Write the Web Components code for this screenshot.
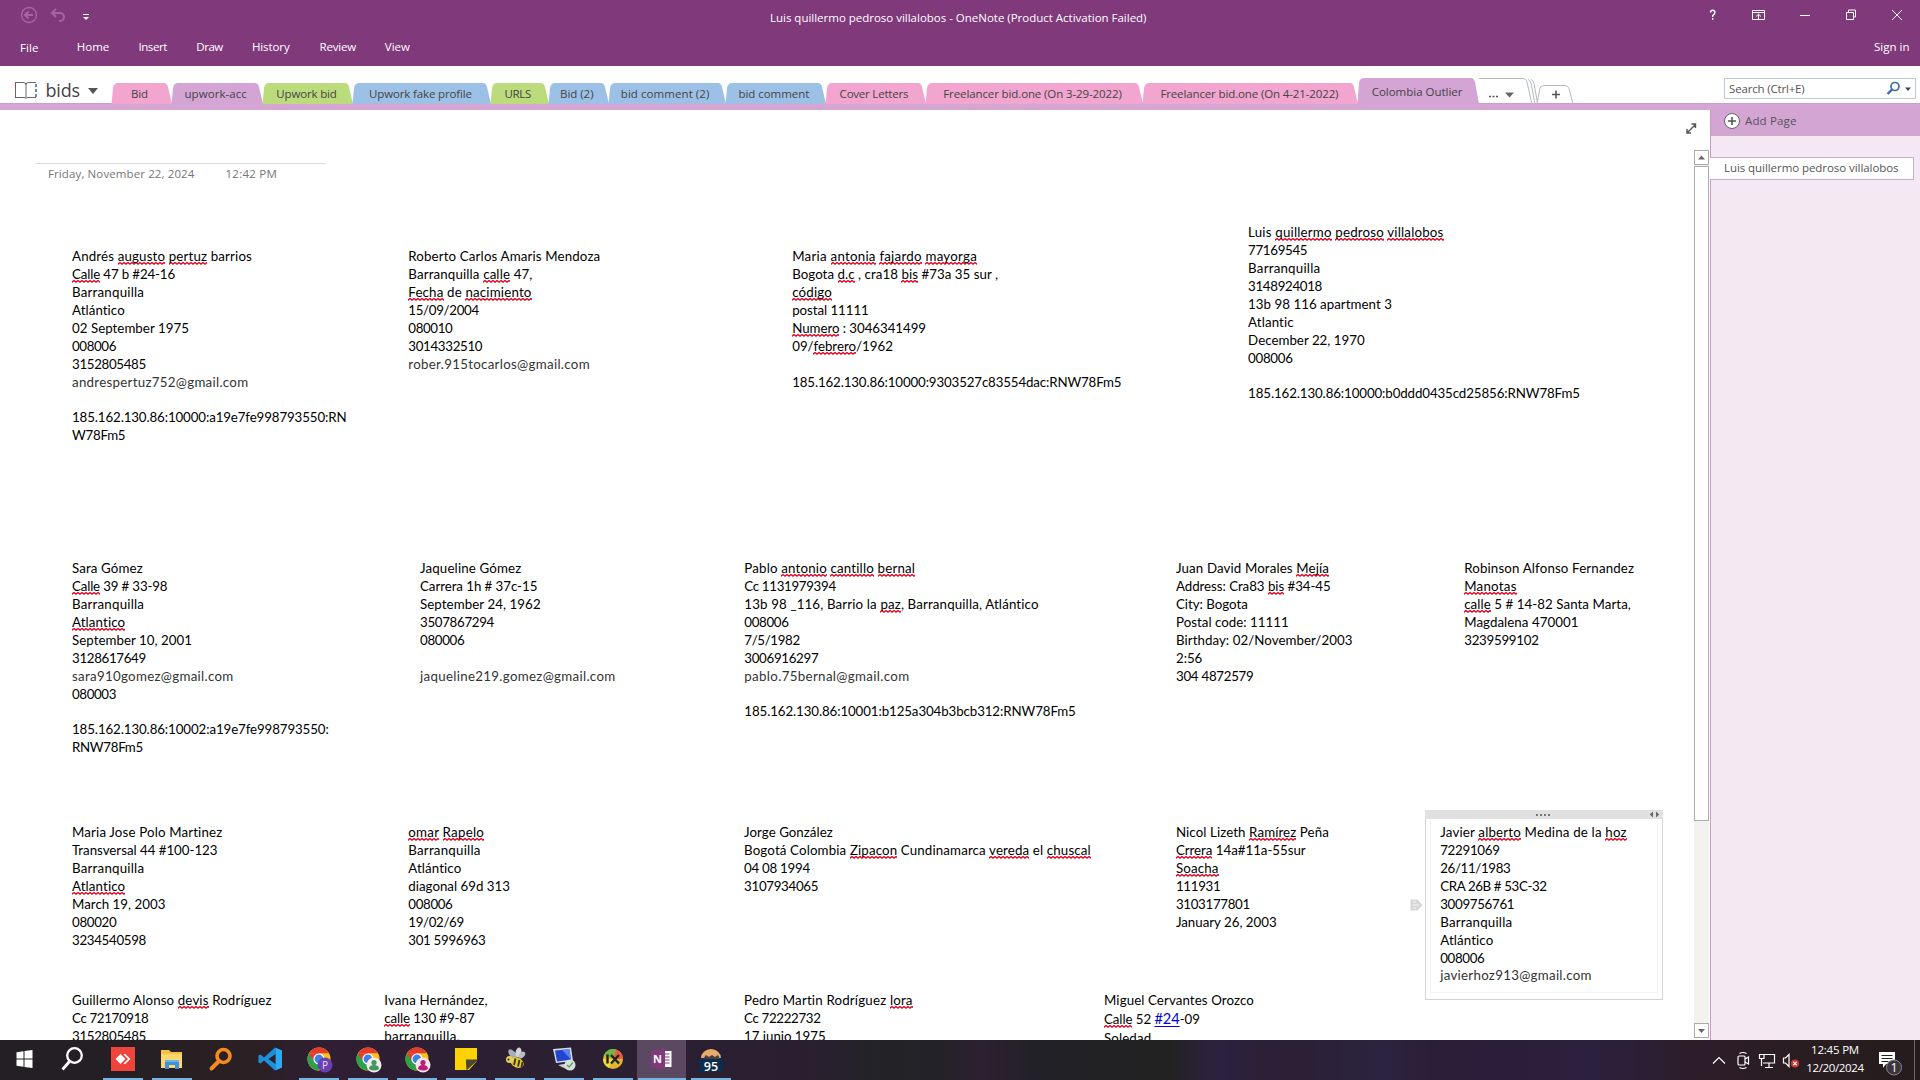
<!DOCTYPE html>
<html lang="en">
<head>
<meta charset="utf-8">
<title>OneNote</title>
<style>
html,body{margin:0;padding:0;height:1080px;overflow:hidden}
body{width:1920px;font-family:"Open Sans","Noto Sans",sans-serif;font-size:11.5px}
</style>
</head>
<body>
<note-app></note-app>
<script>
const FIT = el => {
  const w = parseFloat(el.getAttribute('w'));
  if (!w) return;
  const s = el.shadowRoot.querySelector('span');
  s.style.letterSpacing = '0';
  const nat = s.getBoundingClientRect().width;
  const n = el.textContent.length;
  s.style.letterSpacing = ((w - nat) / n) + 'px';
};
const define = (name, html, after) => customElements.define(name, class extends HTMLElement {
  constructor(){ super(); this.attachShadow({mode:'open'}); }
  connectedCallback(){
    this.shadowRoot.innerHTML = typeof html === 'function' ? html(this) : html;
    if (after) after(this);
  }
});

/* text run with a fixed advance width */
define('fit-text', e => `<style>:host{display:block;flex:none;white-space:pre;width:${e.getAttribute('w')}px}span{display:inline-block}</style><span><slot></slot></span>`, FIT);

/* misspelled word */
define('sp-err', `<style>:host{display:inline;padding-bottom:1px;background:url("data:image/svg+xml,%3Csvg xmlns='http://www.w3.org/2000/svg' width='4' height='3'%3E%3Cpath d='M-1 3L2 .5L5 3' fill='none' stroke='%23e8001c' stroke-width='1.3'/%3E%3C/svg%3E") repeat-x left bottom}</style><slot></slot>`);
define('note-link', `<style>:host{display:inline;color:#0000e0;font-size:14.6px;text-decoration:underline;text-underline-offset:2px}</style><slot></slot>`);

define('note-line', e => `<style>:host{display:block;height:${e.getAttribute('h')||18}px;line-height:${e.getAttribute('h')||18}px;white-space:pre;color:${e.hasAttribute('mail')?'#333':'#000'}}span{display:inline-block}</style><span><slot></slot></span>`, FIT);

/* free-floating text container on the page canvas */
define('note-block', e => `<style>:host{position:absolute;left:${e.getAttribute('x')}px;top:${e.getAttribute('y')}px;font-family:Lato,sans-serif;font-size:13.3px}</style><slot></slot>`);

define('note-frame', `<style>
:host{position:absolute;left:1425px;top:700px;width:236px;height:188px;border:1px solid #d4d4d4}
.h{height:9px;background:#e1e1e1;display:flex;align-items:center;justify-content:flex-end;margin:-1px -1px 0}
.d{display:flex;gap:2px;margin-right:99px}.d i{width:2px;height:2px;background:#777}
.in{border:1px solid #f4f4f4;margin:0 4px;height:173px;border-top:0}
.tag{position:absolute;left:-16px;top:88px}
svg{display:block}.ar{margin-right:2px}</style>
<div class="h"><div class="d"><i></i><i></i><i></i><i></i></div><svg class="ar" width="12" height="9"><path d="M4 1.5v6L.8 4.5zM7 1.5v6l3.2-3z" fill="#666"/></svg></div><div class="in"></div>
<svg class="tag" width="14" height="12"><path d="M.5.5h7l5 5.5l-5 5.5h-7z" fill="#d6d6d6"/><path d="M3 3h3M3 6h6M3 9h3" stroke="#f4f4f4"/></svg>`);

define('title-bar', `<style>
:host{display:block;height:66px;background:#80397b;color:#fff}
.r{display:flex;height:36px;align-items:center}
.r svg{display:block;flex:none}.m{height:22px}
.m fit-text{line-height:22px}
</style>
<div class="r">
<svg width="100" height="36" fill="none"><g stroke="#a565a1" stroke-width="1.4"><circle cx="29" cy="15" r="7.5"/><path d="M33 15h-8M28.500 11.500L25 15l3.500 3.500" stroke-width="2"/><path d="M52 13h8a4 4 0 0 1 0 8h-1M56 9l-4 4l4 4" stroke-width="2"/></g><path d="M83 14.500h6" stroke="#fff"/><path d="M83 17h6l-3 3z" fill="#fff"/></svg>
<fit-text w="376.500" style="margin-left:670px;margin-top:-2px">Luis quillermo pedroso villalobos - OneNote (Product Activation Failed)</fit-text>
<svg width="220" height="36" style="margin-left:553.500px" fill="none" stroke="#fff"><path d="M10.500 12.500q0-2.200 2.200-2.200t2.200 2.200q0 1.600-2.200 3v1.500M12.700 18v1.800" stroke-width="1.400"/><path d="M52.500 10.500h12v9h-12zM52.500 12.500h12M58.500 19v-4.500M56 16.500l2.500-2.300l2.500 2.300"/><path d="M100 15.500h10"/><path d="M146.500 12.500h7v7h-7zM148.500 12v-2h7v7h-2"/><path d="M192 10l10 10M202 10l-10 10"/></svg>
</div>
<div class="r m">
<fit-text w="18.400" style="margin-left:20px;padding-top:2px">File</fit-text>
<fit-text w="32.700" style="margin-left:38.300px">Home</fit-text>
<fit-text w="28.600" style="margin-left:29px">Insert</fit-text>
<fit-text w="26.500" style="margin-left:29.300px">Draw</fit-text>
<fit-text w="37.600" style="margin-left:29.200px">History</fit-text>
<fit-text w="36.300" style="margin-left:30px">Review</fit-text>
<fit-text w="25" style="margin-left:29px">View</fit-text>
<fit-text w="35.500" style="margin-left:auto;margin-right:10.500px">Sign in</fit-text>
</div>`);

/* section tab: w = box width, p = text inset, t = text width */
define('section-tab', e => {
  const w = +e.getAttribute('w'), h = e.hasAttribute('on') ? 26 : 21;
  return `<style>:host{display:block;flex:none;position:relative;width:${w}px;height:${h}px;color:#444}
svg{position:absolute;left:0;top:0;overflow:visible}fit-text{position:relative;margin-left:${e.getAttribute('p')}px;line-height:${h+1}px}</style>
<svg width="${w}" height="${h}"><path d="M-.5 ${h}L1 5Q2 0 6 0H${w-8}Q${w-5} 0 ${w-4} 4L${w} ${h}z" fill="${e.getAttribute('c')}"/></svg><fit-text w="${e.getAttribute('t')}">${e.getAttribute('label')}</fit-text>`;
});

define('section-bar', `<style>
:host{display:flex;height:38px;align-items:flex-end;background:#fff;border-bottom:6px solid #d5a6d4;box-shadow:inset 0 -1px #c9a0cc}
svg{display:block;flex:none}
.nb{box-sizing:border-box;padding-top:9px;display:flex;width:112px;height:38px;align-items:center;flex:none}
.nb fit-text{font-size:18px;color:#444;line-height:28px;margin-left:7.500px}
.s{box-sizing:border-box;width:192px;height:21px;border:1px solid #bcccd4;margin:0 4px 5px auto;display:flex;align-items:center;color:#555}
</style>
<div class="nb"><svg width="24" height="20" style="margin-left:14px" fill="none" stroke="#666"><path d="M1 2.500h8q3 0 3 2q0-2 3-2h7M12 4v14M1 17.500h8q3 0 3 1q0-1 3-1h7M1.500 7v10"/><path d="M1.500 3v4" stroke="#d33"/><path d="M22 4v3M22 9v3M22 14v3" stroke="#3668a0" stroke-width="1.500"/></svg><fit-text w="34.500">bids</fit-text><svg width="10" height="8" style="margin-left:8px;margin-top:2px"><path d="M0 1h10l-5 6z" fill="#555"/></svg></div>
<section-tab w="60" p="19" t="16.700" c="#f2a5ce" label="Bid"></section-tab>
<section-tab w="91" p="12.500" t="62.400" c="#d3a4d4" label="upwork-acc"></section-tab>
<section-tab w="90" p="13.300" t="60.400" c="#bcdb7d" label="Upwork bid"></section-tab>
<section-tab w="138" p="16" t="102.900" c="#9dc1e6" label="Upwork fake profile"></section-tab>
<section-tab w="58" p="13.500" t="26.500" c="#bcdb7d" label="URLS"></section-tab>
<section-tab w="60" p="11" t="33.500" c="#9dc1e6" label="Bid (2)"></section-tab>
<section-tab w="117" p="11.800" t="88.600" c="#9dc1e6" label="bid comment (2)"></section-tab>
<section-tab w="100" p="12.400" t="71" c="#9dc1e6" label="bid comment"></section-tab>
<section-tab w="100" p="13.600" t="68.600" c="#f2a5ce" label="Cover Letters"></section-tab>
<section-tab w="217" p="17.300" t="178.400" c="#f2a5ce" label="Freelancer bid.one (On 3-29-2022)"></section-tab>
<section-tab w="215" p="17.400" t="178" c="#f2a5ce" label="Freelancer bid.one (On 4-21-2022)"></section-tab>
<section-tab on w="121" p="13.700" t="90.800" c="#d3a4d4" label="Colombia Outlier"></section-tab>
<svg width="100" height="26" fill="none"><g stroke="#b4b8c0"><path d="M-6 .500H44Q47 .500 48 4L53 26M49 1.500q2 0 3 4L56 26M52 1.500q2 0 3 4L58.500 25M58 26L61 10q1-2.500 4-2.500h21q3 0 4 3L94 26"/></g><path d="M10 18.500h2M13.500 18.500h2M17 18.500h2" stroke="#555" stroke-width="1.500"/><path d="M26 14.500h9l-4.500 5z" fill="#666"/><path d="M73 16.500h8M77 12.500v8" stroke="#555" stroke-width="1.600"/></svg>
<div class="s"><fit-text w="75.500" style="margin-left:4px;margin-top:-1px">Search (Ctrl+E)</fit-text><svg width="32" height="19" style="margin-left:79px" fill="none"><circle cx="11" cy="7.500" r="4" stroke="#3a6ea5" stroke-width="1.700"/><path d="M8 10.500L3.500 15" stroke="#3a6ea5" stroke-width="2.400"/><path d="M21 8.500h6l-3 3.500z" fill="#444"/></svg></div>`);

const L = (w, t, a='') => `<note-line w="${w}" ${a}>${t.replace(/\{(.*?)\}/g,'<sp-err>$1</sp-err>').replace(/\[(.*?)\]/g,'<note-link>$1</note-link>')}</note-line>`;
const B = (x, y, ...l) => `<note-block x="${x}" y="${y-110}">${l.map(v => L(...v)).join('')}</note-block>`;
const G = 'h="17"', M = 'mail';
define('page-canvas', () => `<style>
:host{display:block;position:relative;flex:none;width:1694px;height:930px;background:#fff;overflow:hidden}
.t{width:291px;border-top:1px solid #dcdcdc;margin:53px 0 0 35px;display:flex;color:#767676;font-size:11.500px;line-height:20px}
</style>
<div class="t"><fit-text w="146.500" style="margin-left:13px">Friday, November 22, 2024</fit-text><fit-text w="51.500" style="margin-left:31px">12:42 PM</fit-text></div>
<note-frame></note-frame>`
+ B(72,247,[180,'Andrés {augusto} {pertuz} barrios'],[103,'{Calle} 47 b #24-16'],[72.2,'Barranquilla'],[53,'Atlántico'],[116.9,'02 September 1975'],[44,'008006'],[73.9,'3152805485'],[176.4,'andrespertuz752@gmail.com',M],['','',G],[274.5,'185.162.130.86:10000:a19e7fe998793550:RN'],[53.3,'W78Fm5'])
+ B(408.3,247,[192,'Roberto Carlos Amaris Mendoza'],[124.2,'Barranquilla {calle} 47,'],[123.2,'{Fecha} de {nacimiento}'],[70.6,'15/09/2004'],[44,'080010'],[73.9,'3014332510'],[181.6,'rober.915tocarlos@gmail.com',M])
+ B(792.2,247,[184.8,'Maria {antonia} {fajardo} {mayorga}'],[206,'Bogota {d.c} , cra18 {bis} #73a 35 sur ,'],[39.8,'{código}'],[76.5,'postal 11111'],[133.8,'{Numero} : 3046341499'],[100.7,'09/{febrero}/1962'],['',''],[329.2,'185.162.130.86:10000:9303527c83554dac:RNW78Fm5'])
+ B(1248.1,223,[195.4,'Luis {quillermo} {pedroso} {villalobos}'],[59.1,'77169545'],[72.3,'Barranquilla'],[73.9,'3148924018'],[143.8,'13b 98 116 apartment 3'],[45.9,'Atlantic'],[116.6,'December 22, 1970'],[44.5,'008006'],['','',G],[331.8,'185.162.130.86:10000:b0ddd0435cd25856:RNW78Fm5'])
+ B(72,559,[70.8,'Sara Gómez'],[95.3,'{Calle} 39 # 33-98'],[72.2,'Barranquilla'],[53.5,'{Atlantico}'],[120,'September 10, 2001'],[73.9,'3128617649'],[161.6,'sara910gomez@gmail.com',M],[44,'080003'],['','',G],[256.7,'185.162.130.86:10002:a19e7fe998793550:'],[70.8,'RNW78Fm5'])
+ B(420,559,[101.4,'Jaqueline Gómez'],[117.3,'Carrera 1h # 37c-15'],[120.7,'September 24, 1962'],[74,'3507867294'],[44.3,'080006'],['',''],[195.5,'jaqueline219.gomez@gmail.com',M])
+ B(744.3,559,[171,'Pablo {antonio} {cantillo} {bernal}'],[91.5,'Cc 1131979394'],[294.6,'13b 98 _116, Barrio la {paz}, Barranquilla, Atlántico'],[44.3,'008006'],[55.5,'7/5/1982'],[74,'3006916297'],[165.2,'pablo.75bernal@gmail.com',M],['','',G],[331.4,'185.162.130.86:10001:b125a304b3bcb312:RNW78Fm5'])
+ B(1176,559,[153,'Juan David Morales {Mejía}'],[154.7,'Address: Cra83 {bis} #34-45'],[71.8,'City: Bogota'],[112.8,'Postal code: 11111'],[176.5,'Birthday: 02/November/2003'],[26.3,'2:56'],[77.5,'304 4872579'])
+ B(1464.2,559,[170,'Robinson Alfonso Fernandez'],[52.5,'{Manotas}'],[166.7,'{calle} 5 # 14-82 Santa Marta,'],[114.3,'Magdalena 470001'],[74.4,'3239599102'])
+ B(72,823,[150.6,'Maria Jose Polo Martinez'],[145.5,'Transversal 44 #100-123'],[72.3,'Barranquilla'],[53.5,'{Atlantico}'],[93.5,'March 19, 2003'],[44.4,'080020'],[74,'3234540598'])
+ B(408.3,823,[75.8,'{omar} {Rapelo}'],[72.3,'Barranquilla'],[53.2,'Atlántico'],[101.7,'diagonal 69d 313'],[44.2,'008006'],[55.5,'19/02/69'],[77.1,'301 5996963'])
+ B(744.1,823,[88.7,'Jorge González'],[346.7,'Bogotá Colombia {Zipacon} Cundinamarca {vereda} el {chuscal}'],[65.8,'04 08 1994'],[74,'3107934065'])
+ B(1175.9,823,[153,'Nicol Lizeth {Ramírez} Peña'],[129.8,'{Crrera} 14a#11a-55sur'],[42.7,'{Soacha}'],[44.5,'111931'],[74,'3103177801'],[100.8,'January 26, 2003'])
+ B(1440.2,823,[186.5,'Javier {alberto} Medina de la {hoz}'],[59.4,'72291069'],[70.3,'26/11/1983'],[106.5,'CRA 26B # 53C-32'],[74,'3009756761'],[72.2,'Barranquilla'],[53.4,'Atlántico'],[44.2,'008006'],[151.6,'javierhoz913@gmail.com','mail h="17"'])
+ B(72,991,[199.6,'Guillermo Alonso {devis} Rodríguez'],[76.5,'Cc 72170918'],[74,'3152805485'])
+ B(384.3,991,[103.3,'Ivana Hernández,'],[90.2,'{calle} 130 #9-87'],[75.6,'barranquilla,'])
+ B(744.1,991,[168.8,'Pedro Martin Rodríguez {lora}'],[76.5,'Cc 72222732'],[81.5,'17 junio 1975'])
+ B(1104,991,[149.9,'Miguel Cervantes Orozco'],[93.6,'{Calle} 52 [#24]-09','h="20"'],[47.2,'Soledad']));

define('scroll-bar', `<style>
:host{display:block;flex:none;width:16px;height:930px;background:#fff;position:relative}
.w{display:flex;flex-direction:column;width:15px;height:888px;margin-top:40px;background:#f2f2f0}
b{box-sizing:border-box;display:block;width:15px;border:1px solid #ababab;background:#fff;flex:none}
svg{display:block}.x{position:absolute;left:-9px;top:12px}</style>
<svg class="x" width="13" height="13" fill="none" stroke="#555" stroke-width="1.400"><path d="M2.500 10.500L10 3M6.500 2h4v4M2 7v4h4"/></svg>
<div class="w"><b style="height:15px"><svg width="13" height="13"><path d="M3 8.500h7L6.500 4.500z" fill="#666"/></svg></b><b style="height:655px;margin-top:1px"></b><b style="height:15px;margin-top:auto"><svg width="13" height="13"><path d="M3 5h7L6.500 9z" fill="#666"/></svg></b></div>`);

define('page-list', `<style>
:host{display:block;flex:1;height:930px;box-sizing:border-box;border-left:1px solid #c99ac8;background:#f4e8f3;color:#555}
.a{height:26px;background:#d3a5d3;display:flex;align-items:center;padding-left:12px}
.p{box-sizing:border-box;width:204px;height:23px;margin-top:21px;margin-left:-1px;background:#fff;border:1px solid #cfa9cf;border-left:0;padding-left:14px;line-height:19px}
svg{display:block}</style>
<div class="a"><svg width="18" height="18" style="margin-top:-4px"><circle cx="9" cy="9" r="7.500" fill="#fff" stroke="#666"/><path d="M5 9h8M9 5v8" stroke="#555" stroke-width="1.600"/></svg><fit-text w="51.500" style="margin:-5px 0 0 4px">Add Page</fit-text></div>
<div class="p"><fit-text w="174.500">Luis quillermo pedroso villalobos</fit-text></div>`);

const chrome = badge => `<g transform="translate(12 12)"><circle r="11.500" fill="#fbc116"/><path d="M-9.960 -5.750A11.500 11.500 0 0 0 -1 11.450L4.500 2.600L0 0z" fill="#2da04c"/><path d="M-9.960 -5.750A11.500 11.500 0 0 1 9.960 -5.750H0z" fill="#e33b2e"/><path d="M-9.960 -5.750L-4.500 3L0 -5.750z" fill="#e33b2e"/><circle r="5.600" fill="#fff"/><circle r="4.400" fill="#3f7fe8"/></g>${badge}`;
const person = c => `<circle cx="18" cy="18" r="7.500" fill="#f3e9ee"/><circle cx="18" cy="15.500" r="2.600" fill="${c}"/><path d="M13 22q0-4 5-4t5 4q-5 3-10 0z" fill="${c}"/>`;
const ICONS = [
 ['', `<path d="M3.500 5.300L10.500 4.300V11.500H3.500zM11.500 4.100L19.500 3V11.500H11.500zM3.500 12.500H10.500V19.700L3.500 18.700zM11.500 12.500H19.500V21L11.500 19.900z" fill="#fff"/>`],
 ['', `<circle cx="12.500" cy="8.500" r="7.300" fill="none" stroke="#fff" stroke-width="2.300"/><path d="M7.500 14.500L.5 22.500" stroke="#fff" stroke-width="2.800"/>`],
 ['u', `<path d="M0 0h24v24H0z" fill="#ef443b"/><path d="M4.500 12L9.500 7l5 5l-5 5z" fill="#fff"/><path d="M12.500 7.500L14 6.800L19.500 12L14 17.200L12.500 16.500L17 12z" fill="#fff"/>`],
 ['u', `<path d="M1 3h8l2 2h11v16H1z" fill="#f5c044"/><path d="M1 7h21v14H1z" fill="#fcd771"/><path d="M5 13h14v9h-4v-4h-6v4H5z" fill="#3d92d9"/><path d="M5 13h14v2H5z" fill="#67b4ee"/>`],
 ['', `<circle cx="14.500" cy="9" r="6.500" fill="none" stroke="#f58a1f" stroke-width="3.600"/><path d="M10 14L2.500 21.500" stroke="#f58a1f" stroke-width="4" stroke-linecap="round"/>`],
 ['', `<path d="M17 0.500L24 3.500V20.500L17 23.500L6 13.500L2.500 16.500L.5 15.500V8.500L2.500 7.500L6 10.500zM17.500 7L10.500 12L17.500 17z" fill="#1d8fdb" fill-rule="evenodd"/><path d="M18 1L24 3.500V20.500L18 23z" fill="#2fa9f2"/>`],
 ['u', chrome(`<circle cx="18" cy="18" r="7.500" fill="#6b3fb0"/><text x="18" y="21.500" font-size="10" fill="#e8dcf8" text-anchor="middle">P</text>`)],
 ['u', chrome(person('#3c9a5f'))],
 ['u', chrome(person('#c2187e'))],
 ['u', `<path d="M1 1h22v13l-8 9H1z" fill="#fdd306"/><path d="M12 13h11L13 23z" fill="#57502f"/><path d="M12 12.500h11v1.500L12.500 23z" fill="#4c4731"/>`],
 ['u', `<g transform="translate(1.500 0)"><ellipse cx="8" cy="7" rx="3" ry="5.500" transform="rotate(-40 8 7)" fill="#a9adb4"/><ellipse cx="14" cy="5.500" rx="3" ry="5" transform="rotate(10 14 5.500)" fill="#d2d5d8"/><ellipse cx="17.500" cy="8" rx="2.500" ry="4" transform="rotate(40 17.500 8)" fill="#b9bdc2"/><ellipse cx="12.500" cy="15.500" rx="7" ry="5" transform="rotate(25 12.500 15.500)" fill="#dfc53c"/><path d="M11 11.500L9.500 18M15 13l-1.500 6.500M18 15l-1 5" stroke="#3b3416" stroke-width="1.800"/><circle cx="5" cy="12.500" r="3.500" fill="#e7d058"/><circle cx="4" cy="12.500" r="1" fill="#222"/></g>`],
 ['u', `<path d="M1 2L19 0.500L21 14L4 16z" fill="#d6dce6"/><path d="M3 3.500L17.500 2.300L19 12.700L5 14.500z" fill="#2145d0"/><path d="M10 2.800L17.500 2.300L19 12.700z" fill="#5d83ed"/><path d="M6 18l12-2l5 3l-7 4z" fill="#cbd2da"/><circle cx="18" cy="18" r="5.500" fill="#d7dfdc"/><path d="M15 18l2 2l4-4.500" fill="none" stroke="#60a060" stroke-width="1.500"/>`],
 ['u', `<circle cx="12" cy="12" r="10" fill="#e2b52e"/><path d="M3 8A10 10 0 0 1 15 2.500L12 12z" fill="#72b64a"/><path d="M15 2.500A10 10 0 0 1 22 12H12z" fill="#e85d3b"/><path d="M2 12a10 10 0 0 0 6 9l4-9z" fill="#e8dc43"/><path d="M6.500 7.500v9M10 8l8 8.500M18 8L10 16.500" stroke="#222" stroke-width="2.400"/>`],
 ['u a', `<path d="M15 4h6.500v16h-6.500z" fill="#fff"/><path d="M15 7h4.500M15 10h4.500M15 13h4.500M15 16h4.500" stroke="#80397b" stroke-width="1.200"/><path d="M1 3.500L15 1.500V22.500L1 20.500z" fill="#80397b"/><text x="7.500" y="16" font-size="11" font-weight="700" fill="#fff" text-anchor="middle">N</text>`],
 ['u', `<path d="M0 11h24v14H0z" fill="#0d2b4e"/><path d="M2 11a10 9 0 0 1 20 0z" fill="#e8ab6e"/><path d="M4 12l3-4l3 2l3-2l3 2l3-2l2 4z" fill="#47403d"/><text x="12" y="23.500" font-size="12.500" font-weight="600" fill="#fff" text-anchor="middle">95</text>`]
];
define('task-icon', e => { const [c, g] = ICONS[+e.getAttribute('n')]; return `<style>
:host{display:flex;flex:none;box-sizing:border-box;width:49px;height:40px;padding-top:7px;flex-direction:column;align-items:center;justify-content:space-between;${c.includes('a')?'background:#5a4960;':''}}
svg{display:block;overflow:visible;font-family:"Open Sans",sans-serif}i{height:2px;width:${c.includes('a')?48:40}px;background:${c.includes('u')?'#76b4e3':'transparent'}}</style><svg width="24" height="24" viewBox="0 0 24 24">${g}</svg><i></i>`; });

define('task-bar', () => `<style>
:host{display:flex;height:40px;background:linear-gradient(90deg,#231f24 0,#231f24 5%,#2b2023 13%,#2f1e34 17%,#2b2032 31%,#291f30 42%,#232327 46%,#232228 49%,#2d2032 51%,#222127 54%,#222222 61%,#2c2140 63%,#2b2034 67%,#2b2440 72%,#2c1d38 75%,#2b203e 83%,#2d1d2a 88%,#2a1d21 94%,#241c1d 100%)}
.tr{margin-left:auto;display:flex;color:#fff}.c{display:flex;flex-direction:column;align-items:center;width:60px;padding-top:1px}
.c fit-text{line-height:18px}svg{display:block;font-family:"Open Sans",sans-serif}</style>
${ICONS.map((_, i) => `<task-icon n="${i}"></task-icon>`).join('')}
<div class="tr"><svg width="100" height="40" fill="none" stroke="#fff" stroke-width="1.200"><path d="M8 23.500l6-6l6 6"/><rect x="33" y="16" width="7" height="9" rx="1"/><path d="M40 19l3.500-2v7L40 22M34.500 13.500q3.500-2 7 0M34.500 27.500q3.500 2 7 0"/><path d="M57 14.500h12.500v8.500H58M64 23v4M60 27.500h8M54.500 14.500h4.500v4h-4.500zM56.500 18.500v7.500"/><path d="M78.500 18v5h2l3.500 3.500V14.500L80.500 18z"/><circle cx="90" cy="23.500" r="4" fill="#cc3838" stroke="none"/><path d="M88.300 21.800l3.400 3.400M91.700 21.800l-3.400 3.400"/></svg>
<div class="c"><fit-text w="48">12:45 PM</fit-text><fit-text w="57.500">12/20/2024</fit-text></div>
<svg width="54" height="40" style="margin-left:1px"><path d="M13 12h16v12H20l-3 4v-4h-4z" fill="#fff"/><path d="M15.500 15.500h11M15.500 18.500h11M15.500 21.500h7" stroke="#2a1d21"/><circle cx="28" cy="27.500" r="7.500" fill="#39353a" stroke="#8b878b"/><text x="28" y="32" font-size="12.500" fill="#fff" text-anchor="middle">1</text><path d="M48.500 0v40" stroke="#6b6668"/></svg></div>`);

define('note-app', `<style>:host{display:flex;flex-direction:column;width:1920px;height:1080px;background:#fff}.m{display:flex;height:930px}section-bar{box-sizing:border-box;height:44px}</style>
<title-bar></title-bar><section-bar></section-bar><div class="m"><page-canvas></page-canvas><scroll-bar></scroll-bar><page-list></page-list></div><task-bar></task-bar>`);
</script>
</body>
</html>
